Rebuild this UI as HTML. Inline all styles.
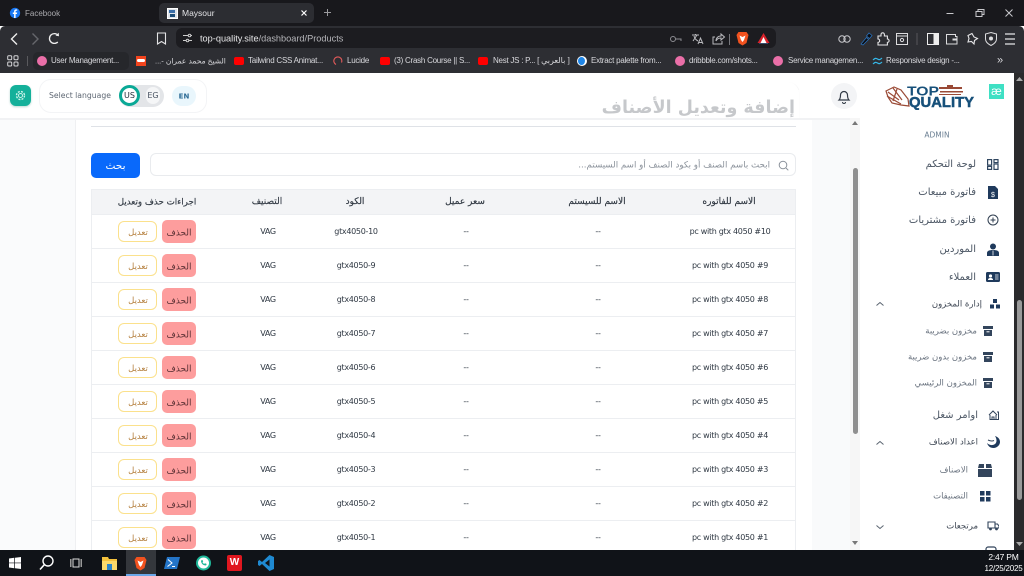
<!DOCTYPE html>
<html lang="en"><head><meta charset="utf-8"><title>Maysour</title>
<style>
html,body{margin:0;padding:0;width:1024px;height:576px;overflow:hidden;background:#fff}
body{position:relative;font-family:"Liberation Sans","DejaVu Sans",sans-serif}
div,span,svg{position:absolute;box-sizing:border-box}
.t{white-space:nowrap;line-height:1}
.c{transform:translate(-50%,-50%)}
.r{transform:translateY(-50%)}
.ar{font-family:"DejaVu Sans",sans-serif;direction:rtl}
.app{font-family:"DejaVu Sans",sans-serif}
.bm{color:#d8d8dc;font-size:8px;letter-spacing:-.25px;top:61px;transform:translateY(-50%);white-space:nowrap;line-height:1;font-family:"Liberation Sans","DejaVu Sans",sans-serif}
.row{left:91px;width:705px;height:34px;border-bottom:1px solid #eceef1;border-left:1px solid #eceef1;border-right:1px solid #eceef1;background:#fff}
.row .t{top:17px;font-size:8px;letter-spacing:-.3px;color:#2f3843;font-family:"DejaVu Sans",sans-serif;transform:translate(-50%,-50%)}
.del{left:70px;top:5px;width:34px;height:23px;background:#fd9d9d;border-radius:5px}
.edit{left:26px;top:6px;width:39px;height:21px;background:#fff;border:1px solid #fbe18c;border-radius:6px}
.row .del .t{left:17px;top:13.500px;font-size:9px;letter-spacing:0;color:#5a3034;direction:rtl}
.row .edit .t{left:19px;top:10.500px;font-size:8.500px;letter-spacing:0;color:#b5803f;direction:rtl}
.hd{top:202px;font-size:9px;color:#2e3640;transform:translate(-50%,-42%);direction:rtl;-webkit-text-stroke:.15px #2e3640}
.m{font-size:10px;color:#4a5563;transform:translateY(-42%);direction:rtl;font-family:"DejaVu Sans",sans-serif}
.s{font-size:8.500px;color:#6b7480;transform:translateY(-42%);direction:rtl;font-family:"DejaVu Sans",sans-serif}
</style></head><body>

<!-- tab strip -->
<div style="left:0;top:0;width:1024px;height:26px;background:#18181c"></div>
<svg style="left:9px;top:7px" width="12" height="12" viewBox="0 0 12 12"><circle cx="6" cy="6" r="5.200" fill="#1877f2"/><path d="M6.600 11V7h1.300l.3-1.500H6.600V4.600c0-.5.2-.8.8-.8h.8V2.500c-.3 0-.7-.1-1.100-.1-1.200 0-2 .7-2 2v1.100H3.800V7h1.300v4z" fill="#fff"/></svg>
<span class="t r" style="left:25px;top:13.500px;font-size:8px;color:#a9a9ad">Facebook</span>
<div style="left:159px;top:3px;width:155px;height:20px;background:#2c2d32;border-radius:5px"></div>
<div style="left:167px;top:8px;width:11px;height:11px;background:#dfe4ea;border:1px solid #fff"><div style="left:1px;top:1px;width:6px;height:3px;background:#3a6ea8"></div><div style="left:2px;top:5px;width:5px;height:3px;background:#1d4e79"></div></div>
<span class="t r" style="left:182px;top:13px;font-size:8.500px;color:#e3e3e6">Maysour</span>
<svg style="left:300px;top:9px" width="8" height="8" viewBox="0 0 8 8"><path d="M1.500 1.500l5 5M6.500 1.500l-5 5" stroke="#fff" stroke-width="1.200"/></svg>
<svg style="left:323px;top:8px" width="9" height="9" viewBox="0 0 9 9"><path d="M4.500 1v7M1 4.500h7" stroke="#9a9a9e" stroke-width="1"/></svg>
<svg style="left:945px;top:8px" width="72" height="10" viewBox="0 0 72 10"><path d="M1.500 5.500h7" stroke="#c8c8cc"/><path d="M31 3.500h6v5h-6zM33 3.500V1.500h6v5h-2" stroke="#c8c8cc" fill="none"/><path d="M60.500 1.500l7 7M67.500 1.500l-7 7" stroke="#c8c8cc"/></svg>

<!-- toolbar -->
<div style="left:0;top:26px;width:1024px;height:47px;background:#2d2e33;border-radius:5px 5px 0 0"></div>
<svg style="left:8px;top:31px" width="60" height="16" viewBox="0 0 60 16"><path d="M9 2.500L3.500 8 9 13.500" stroke="#eee" stroke-width="1.400" fill="none"/><path d="M24.500 2.500L30 8l-5.500 5.500" stroke="#66676c" stroke-width="1.400" fill="none"/><path d="M50 4.200A4.900 4.900 0 1 0 49.800 11" stroke="#eee" stroke-width="1.300" fill="none"/><path d="M47.500 4.600L51 5.200 50.700 1.700z" fill="#eee"/></svg>
<svg style="left:156px;top:32px" width="11" height="13" viewBox="0 0 11 13"><path d="M1.500 1h8v11L5.500 9.500 1.500 12z" stroke="#e4e4e6" stroke-width="1.100" fill="none"/></svg>
<div style="left:176px;top:28px;width:600px;height:20px;background:#1c1c20;border-radius:6px"></div>
<svg style="left:182px;top:33px" width="11" height="10" viewBox="0 0 11 10"><path d="M1 2.500h5M1 7.500h3M9 2.500h1M7 7.500h3" stroke="#ccc" fill="none"/><circle cx="7.500" cy="2.500" r="1.300" stroke="#ccc" fill="none"/><circle cx="5.500" cy="7.500" r="1.300" stroke="#ccc" fill="none"/></svg>
<span class="t r" style="left:200px;top:38.500px;font-size:9.200px;color:#e8e8ea">top-quality.site<span style="position:static;color:#b5b5b9">/dashboard/Products</span></span>
<svg style="left:669px;top:32px" width="64" height="14" viewBox="0 0 64 14"><circle cx="4" cy="7" r="2.500" stroke="#8d8d92" fill="none"/><path d="M6.500 7h5.500v2" stroke="#8d8d92" fill="none"/><path d="M23 3h7M26.500 2v1M24 9l4-6M25 4c.5 2 2 4 4 5M29 12l2.500-6 2.500 6M30 10.500h3" stroke="#b9b9bd" fill="none"/><path d="M46 5h-2v7h9V9M47 9c0-3 2-5 5-5V2l3.500 3L52 8V6c-2 0-4 1-5 3" stroke="#b9b9bd" fill="none"/><path d="M60.500 2v11" stroke="#77777c"/></svg>
<svg style="left:736px;top:31px" width="13" height="15" viewBox="0 0 13 15"><path d="M2.500 1h8L12.500 4 10.500 12 6.500 14.500 2.500 12 .5 4z" fill="#f1521f"/><path d="M3.500 4.500l3 1.500 3-1.500L8 9l-1.500 2L5 9z" fill="#fff"/></svg>
<svg style="left:757px;top:32px" width="13" height="12" viewBox="0 0 13 12"><path d="M6.500 1L12.500 11H.5z" fill="#d8222a"/><path d="M6.500 5L9.500 11h-6z" fill="#fff"/><path d="M2 11h9v1H2z" fill="#3a4a6a"/></svg>
<svg style="left:838px;top:31px" width="182" height="16" viewBox="0 0 182 16"><g transform="translate(0,1)"><circle cx="4" cy="7" r="3.200" stroke="#c9c9cd" fill="none"/><circle cx="9" cy="7" r="3.200" stroke="#c9c9cd" fill="none"/></g><path d="M23 13l5.500-6.500 2 2-5.500 5.500zM28.500 5l2.500-3 3 2.500-2.500 3z" fill="#0b0c0f" stroke="#2a6fb8" stroke-width=".8"/><path d="M40 5h3V3.500a1.700 1.700 0 0 1 3.400 0V5h3v3a1.700 1.700 0 0 1 0 3.400V14h-9.400v-2.600a1.700 1.700 0 0 0 0-3.400z" stroke="#e6e6e8" stroke-width="1.100" fill="none"/><rect x="58.500" y="2.500" width="11" height="11" stroke="#dcdcde" fill="none"/><path d="M58.500 5h11" stroke="#dcdcde"/><circle cx="64" cy="9" r="1.600" stroke="#dcdcde" fill="none"/><path d="M79 2v12" stroke="#56565b"/><rect x="89.500" y="2.500" width="11" height="11" stroke="#eee" fill="none"/><rect x="95.500" y="2.500" width="5" height="11" fill="#eee"/><path d="M108.500 3.500h9v2h1.500v7.500h-10.500z" stroke="#dcdcde" fill="none"/><path d="M114.500 7.500h4.500v2h-4.500z" fill="#dcdcde"/><path d="M134 2.500l2 3.500 3.500 1.500-3 2-.5 3.500-2.500-2.500-3.500.5 1-3.500-1-3z" stroke="#e6e6e8" stroke-width="1.100" fill="none"/><path d="M153 1.500l5.500 1.500v5c0 3-2.500 5-5.500 6.500-3-1.500-5.500-3.500-5.500-6.500V3z" stroke="#dcdcde" fill="none"/><circle cx="153" cy="7.500" r="2" fill="#dcdcde"/><path d="M167 3h10M167 8h10M167 13h10" stroke="#e6e6e8" stroke-width="1.200"/></svg>

<!-- bookmarks -->
<svg style="left:7px;top:55px" width="12" height="12" viewBox="0 0 12 12"><g stroke="#d5d5d8" fill="none"><rect x=".7" y=".7" width="4" height="4" rx="1"/><rect x="7" y=".7" width="4" height="4" rx="1"/><rect x=".7" y="7" width="4" height="4" rx="1"/><rect x="7" y="7" width="4" height="4" rx="1"/></g></svg>
<div style="left:27px;top:56px;width:1px;height:10px;background:#5a5a5e"></div>
<div style="left:33px;top:52px;width:96px;height:18px;background:#26272b;border-radius:5px"></div>
<div style="left:37px;top:56px;width:10px;height:10px;border-radius:50%;background:#ea6fa8"></div>
<span class="bm" style="left:51px">User Management...</span>
<div style="left:136px;top:56px;width:10px;height:10px;background:#f2441d"></div><div style="left:137px;top:59px;width:8px;height:3px;background:#fff;border-radius:2px"></div>
<span class="bm ar" style="left:155px;font-size:7.500px;letter-spacing:0">الشيخ محمد عمران -...</span>
<div style="left:234px;top:57px;width:10px;height:8px;background:#f00;border-radius:2px"></div>
<span class="bm" style="left:248px">Tailwind CSS Animat...</span>
<svg style="left:333px;top:55px" width="10" height="12" viewBox="0 0 10 12"><path d="M3 9.500A4 4 0 1 1 8.500 7.500" stroke="#e25a5a" stroke-width="1.100" fill="none"/></svg>
<span class="bm" style="left:347px">Lucide</span>
<div style="left:380px;top:57px;width:10px;height:8px;background:#f00;border-radius:2px"></div>
<span class="bm" style="left:394px">(3) Crash Course || S...</span>
<div style="left:478px;top:57px;width:10px;height:8px;background:#f00;border-radius:2px"></div>
<span class="bm" style="left:493px;direction:ltr">Nest JS : P... [ بالعربي ]&lrm;</span>
<div style="left:577px;top:56px;width:10px;height:10px;border-radius:50%;background:#fff"></div><div style="left:578px;top:57px;width:7px;height:8px;border-radius:50%;background:#1f86e8"></div>
<span class="bm" style="left:591px">Extract palette from...</span>
<div style="left:675px;top:56px;width:10px;height:10px;border-radius:50%;background:#ea6fa8"></div>
<span class="bm" style="left:689px">dribbble.com/shots...</span>
<div style="left:773px;top:56px;width:10px;height:10px;border-radius:50%;background:#ea6fa8"></div>
<span class="bm" style="left:788px">Service managemen...</span>
<svg style="left:872px;top:57px" width="11" height="8" viewBox="0 0 11 8"><path d="M1 3c2-2 3-2 4.500-1S8 3 10 1M1 7c2-2 3-2 4.500-1S8 7 10 5" stroke="#35b7e8" stroke-width="1.200" fill="none"/></svg>
<span class="bm" style="left:886px">Responsive design -...</span>
<span class="bm" style="left:997px;font-size:11px">»</span>

<!-- page background -->
<div style="left:0;top:73px;width:1014px;height:477px;background:#fff"></div>
<div style="left:0;top:118px;width:75px;height:432px;background:#fafbfc"></div>
<div style="left:75px;top:118px;width:1px;height:432px;background:#eff0f2"></div>
<div style="left:812px;top:118px;width:38px;height:432px;background:#f9fafb"></div>
<div style="left:0;top:118px;width:850px;height:2px;background:#f1f2f4"></div>

<!-- header left -->
<div style="left:10px;top:85px;width:21px;height:21px;background:#14b09a;border-radius:6px;box-shadow:0 1px 2px #b8d8d2"></div>
<svg style="left:15px;top:90px" width="11" height="11" viewBox="0 0 11 11"><circle cx="5.500" cy="5.500" r="2" stroke="#cdf3ea" fill="none"/><circle cx="5.500" cy="5.500" r="4" stroke="#cdf3ea" stroke-dasharray="2 1.200" stroke-width="1.400" fill="none"/></svg>
<div style="left:39px;top:79px;width:168px;height:34px;border:1px solid #f3f4f6;border-radius:12px;background:#fff"></div>
<span class="t r app" style="left:49px;top:96px;font-size:7.700px;color:#5e6773">Select language</span>
<div style="left:119px;top:85px;width:45px;height:22px;background:#e3e5e8;border-radius:11px"></div>
<div style="left:146px;top:87px;width:14px;height:17px;background:#f5f6f7;border-radius:7px"></div>
<span class="t c app" style="left:153px;top:96px;font-size:8px;color:#4b5563">EG</span>
<div style="left:119px;top:85px;width:21px;height:21px;background:#fff;border:3px solid #0aa996;border-radius:50%"></div>
<span class="t c app" style="left:129.500px;top:96px;font-size:8px;color:#1f2a37">US</span>
<div style="left:172px;top:86px;width:24px;height:20px;background:#e9f6fc;border-radius:10px"></div>
<span class="t c app" style="left:184px;top:96.500px;font-size:7px;font-weight:bold;color:#2d6c96">EN</span>

<!-- panel top -->
<div style="left:76px;top:82px;width:724px;height:36px;border-right:1px solid #f6f6f7;border-radius:0 12px 0 0"></div>
<svg style="left:831px;top:83px" width="26" height="26" viewBox="0 0 26 26"><circle cx="13" cy="13" r="13" fill="#f3f4f6"/><path d="M8 17c1.500-1.500 1.500-3 1.500-5a3.500 3.500 0 0 1 7 0c0 2 0 3.500 1.500 5z" stroke="#333b46" stroke-width="1.200" fill="none"/><path d="M11.500 19a1.500 1.500 0 0 0 3 0" stroke="#333b46" fill="none"/></svg>

<!-- logo -->
<svg style="left:885px;top:84px" width="92" height="26" viewBox="0 0 92 26"><g stroke="#9a4a36" stroke-width="1.200" fill="none"><path d="M1 7l8-4 7 3 7 9 1 7-8-1-9-2-4-6z"/><path d="M3 8l11 8M8 4l9 12M2 12l14 8M12 5l-4 12"/></g><path d="M54 3h8V1h6v2h9v2H54zM55 7h23v1.500H55zM54 10h22v1H54z" fill="#9a4a36"/><text x="22" y="11.500" font-family="Liberation Sans" font-weight="bold" font-size="13" textLength="32" lengthAdjust="spacingAndGlyphs" fill="#17507a">TOP</text><text x="24" y="23" font-family="Liberation Sans" font-weight="bold" font-size="15" textLength="65" lengthAdjust="spacingAndGlyphs" fill="#17507a" stroke="#17507a" stroke-width=".5">QUALITY</text></svg>
<div style="left:989px;top:84px;width:15px;height:15px;background:#3fe0c4"></div>
<span class="t c" style="left:996.500px;top:90.500px;font-size:12px;color:#fff">æ</span>

<!-- title -->
<span class="t ar" style="right:229px;top:100px;font-size:17.500px;color:#343c46;font-weight:bold">إضافة وتعديل الأصناف</span>
<div style="left:590px;top:90px;width:215px;height:28px;background:rgba(255,255,255,.72)"></div>
<div style="left:91px;top:126px;width:705px;height:1px;background:#dfe2e7"></div>

<!-- search -->
<div style="left:150px;top:153px;width:646px;height:23px;border:1px solid #e9ebee;border-radius:6px;background:#fff"></div>
<span class="t r ar" style="right:254px;top:165.500px;font-size:8.700px;color:#8b929b">ابحث باسم الصنف أو بكود الصنف أو اسم السيستم...</span>
<svg style="left:778px;top:160px" width="11" height="11" viewBox="0 0 11 11"><circle cx="5" cy="5" r="3.800" stroke="#8b929b" fill="none"/><path d="M8 8l2.300 2.300" stroke="#8b929b"/></svg>
<div style="left:91px;top:153px;width:49px;height:25px;background:#0969fb;border-radius:5px"></div>
<span class="t c ar" style="left:115.500px;top:166px;font-size:10.500px;color:#fff">بحث</span>

<!-- table head -->
<div style="left:91px;top:189px;width:705px;height:26px;background:#f3f4f6;border:1px solid #eceef1"></div>
<span class="t hd ar" style="left:729px">الاسم للفاتوره</span>
<span class="t hd ar" style="left:597px">الاسم للسيستم</span>
<span class="t hd ar" style="left:465px">سعر عميل</span>
<span class="t hd ar" style="left:355px">الكود</span>
<span class="t hd ar" style="left:267px">التصنيف</span>
<span class="t hd ar" style="left:157px;font-size:8.700px">اجراءات حذف وتعديل</span>

<!-- rows -->
<div class="row" style="top:215px"><span class="t" style="left:638px">pc with gtx 4050 #10</span><span class="t" style="left:506px">--</span><span class="t" style="left:374px">--</span><span class="t" style="left:264px">gtx4050-10</span><span class="t" style="left:176px">VAG</span><div class="del"><span class="t c ar">الحذف</span></div><div class="edit"><span class="t c ar">تعديل</span></div></div>
<div class="row" style="top:249px"><span class="t" style="left:638px">pc with gtx 4050 #9</span><span class="t" style="left:506px">--</span><span class="t" style="left:374px">--</span><span class="t" style="left:264px">gtx4050-9</span><span class="t" style="left:176px">VAG</span><div class="del"><span class="t c ar">الحذف</span></div><div class="edit"><span class="t c ar">تعديل</span></div></div>
<div class="row" style="top:283px"><span class="t" style="left:638px">pc with gtx 4050 #8</span><span class="t" style="left:506px">--</span><span class="t" style="left:374px">--</span><span class="t" style="left:264px">gtx4050-8</span><span class="t" style="left:176px">VAG</span><div class="del"><span class="t c ar">الحذف</span></div><div class="edit"><span class="t c ar">تعديل</span></div></div>
<div class="row" style="top:317px"><span class="t" style="left:638px">pc with gtx 4050 #7</span><span class="t" style="left:506px">--</span><span class="t" style="left:374px">--</span><span class="t" style="left:264px">gtx4050-7</span><span class="t" style="left:176px">VAG</span><div class="del"><span class="t c ar">الحذف</span></div><div class="edit"><span class="t c ar">تعديل</span></div></div>
<div class="row" style="top:351px"><span class="t" style="left:638px">pc with gtx 4050 #6</span><span class="t" style="left:506px">--</span><span class="t" style="left:374px">--</span><span class="t" style="left:264px">gtx4050-6</span><span class="t" style="left:176px">VAG</span><div class="del"><span class="t c ar">الحذف</span></div><div class="edit"><span class="t c ar">تعديل</span></div></div>
<div class="row" style="top:385px"><span class="t" style="left:638px">pc with gtx 4050 #5</span><span class="t" style="left:506px">--</span><span class="t" style="left:374px">--</span><span class="t" style="left:264px">gtx4050-5</span><span class="t" style="left:176px">VAG</span><div class="del"><span class="t c ar">الحذف</span></div><div class="edit"><span class="t c ar">تعديل</span></div></div>
<div class="row" style="top:419px"><span class="t" style="left:638px">pc with gtx 4050 #4</span><span class="t" style="left:506px">--</span><span class="t" style="left:374px">--</span><span class="t" style="left:264px">gtx4050-4</span><span class="t" style="left:176px">VAG</span><div class="del"><span class="t c ar">الحذف</span></div><div class="edit"><span class="t c ar">تعديل</span></div></div>
<div class="row" style="top:453px"><span class="t" style="left:638px">pc with gtx 4050 #3</span><span class="t" style="left:506px">--</span><span class="t" style="left:374px">--</span><span class="t" style="left:264px">gtx4050-3</span><span class="t" style="left:176px">VAG</span><div class="del"><span class="t c ar">الحذف</span></div><div class="edit"><span class="t c ar">تعديل</span></div></div>
<div class="row" style="top:487px"><span class="t" style="left:638px">pc with gtx 4050 #2</span><span class="t" style="left:506px">--</span><span class="t" style="left:374px">--</span><span class="t" style="left:264px">gtx4050-2</span><span class="t" style="left:176px">VAG</span><div class="del"><span class="t c ar">الحذف</span></div><div class="edit"><span class="t c ar">تعديل</span></div></div>
<div class="row" style="top:521px"><span class="t" style="left:638px">pc with gtx 4050 #1</span><span class="t" style="left:506px">--</span><span class="t" style="left:374px">--</span><span class="t" style="left:264px">gtx4050-1</span><span class="t" style="left:176px">VAG</span><div class="del"><span class="t c ar">الحذف</span></div><div class="edit"><span class="t c ar">تعديل</span></div></div>

<!-- inner scrollbar -->
<div style="left:850px;top:118px;width:10px;height:432px;background:#f6f6f6"></div>
<div style="left:853px;top:168px;width:5px;height:266px;background:#8f8f8f;border-radius:3px"></div>
<svg style="left:852px;top:121px" width="6" height="4" viewBox="0 0 6 4"><path d="M3 0l3 4H0z" fill="#777"/></svg>
<svg style="left:852px;top:541px" width="6" height="4" viewBox="0 0 6 4"><path d="M3 4l3-4H0z" fill="#777"/></svg>

<!-- sidebar -->
<div style="left:860px;top:118px;width:154px;height:432px;background:#fff"></div>
<span class="t c app" style="left:937px;top:135px;font-size:7.500px;color:#6d8194">ADMIN</span>
<span class="t m" style="right:48px;top:164px">لوحة التحكم</span>
<span class="t m" style="right:48px;top:192px">فاتورة مبيعات</span>
<span class="t m" style="right:48px;top:220px">فاتورة مشتريات</span>
<span class="t m" style="right:48px;top:249px">الموردين</span>
<span class="t m" style="right:48px;top:277px">العملاء</span>
<span class="t s" style="right:42px;top:304px;color:#3d4653">إدارة المخزون</span>
<span class="t s" style="right:47px;top:331px">مخزون بضريبة</span>
<span class="t s" style="right:47px;top:357px">مخزون بدون ضريبة</span>
<span class="t s" style="right:47px;top:383px">المخزون الرئيسي</span>
<span class="t m" style="right:46px;top:415px">اوامر شغل</span>
<span class="t s" style="right:46px;top:442px;color:#3d4653">اعداد الاصناف</span>
<span class="t s" style="right:56px;top:470px">الاصناف</span>
<span class="t s" style="right:56px;top:496px">التصنيفات</span>
<span class="t s" style="right:46px;top:526px;color:#3d4653">مرتجعات</span>
<svg style="left:875px;top:300px" width="10" height="8" viewBox="0 0 10 8"><path d="M1.500 5.500L5 2.500l3.500 3" stroke="#5a6470" fill="none"/></svg>
<svg style="left:875px;top:439px" width="10" height="8" viewBox="0 0 10 8"><path d="M1.500 5.500L5 2.500l3.500 3" stroke="#5a6470" fill="none"/></svg>
<svg style="left:875px;top:523px" width="10" height="8" viewBox="0 0 10 8"><path d="M1.500 2.500L5 5.500l3.500-3" stroke="#5a6470" fill="none"/></svg>
<svg style="left:987px;top:159px" width="12" height="11" viewBox="0 0 12 11"><g stroke="#2f4660" stroke-width="1.200" fill="none"><rect x=".6" y=".6" width="4" height="5.500"/><rect x="7" y=".6" width="4" height="3"/><rect x=".6" y="7.400" width="4" height="3"/><rect x="7" y="5" width="4" height="5.400"/></g></svg>
<svg style="left:988px;top:186px" width="10" height="13" viewBox="0 0 10 13"><path d="M0 0h7l3 3v10H0z" fill="#1f3a5c"/><text x="5" y="11" text-anchor="middle" font-family="Liberation Sans" font-size="7" fill="#fff">$</text></svg>
<svg style="left:987px;top:214px" width="12" height="12" viewBox="0 0 12 12"><circle cx="6" cy="6" r="5" stroke="#2f3e50" fill="none"/><path d="M6 3.500v5M3.500 6h5" stroke="#2f3e50"/></svg>
<svg style="left:987px;top:243px" width="12" height="13" viewBox="0 0 12 13"><circle cx="6" cy="3.500" r="3" fill="#1f3a5c"/><path d="M0 13V10c0-2 2-3 6-3s6 1 6 3v3z" fill="#1f3a5c"/><path d="M6 7.500v5" stroke="#fff" stroke-width=".8"/></svg>
<svg style="left:986px;top:272px" width="14" height="10" viewBox="0 0 14 10"><rect width="14" height="10" rx="1.500" fill="#1f3a5c"/><circle cx="4.500" cy="4" r="1.600" fill="#fff"/><path d="M2 8c0-1.500 1-2 2.500-2S7 6.500 7 8z" fill="#fff"/><path d="M9 3h3.500M9 5h3.500M9 7h3.500" stroke="#fff" stroke-width=".8"/></svg>
<svg style="left:990px;top:299px" width="10" height="10" viewBox="0 0 10 10"><g fill="#1f3a5c"><rect x="3" y="0" width="4" height="4"/><rect x="0" y="5.500" width="4" height="4"/><rect x="6" y="5.500" width="4" height="4"/></g></svg>
<svg style="left:983px;top:326px" width="10" height="10" viewBox="0 0 10 10"><path d="M0 0h10v3H0zM1 4h8v6H1z" fill="#33455c"/><path d="M3.500 5.800h3" stroke="#fff"/></svg>
<svg style="left:983px;top:352px" width="10" height="10" viewBox="0 0 10 10"><path d="M0 0h10v3H0zM1 4h8v6H1z" fill="#33455c"/><path d="M3.500 5.800h3" stroke="#fff"/></svg>
<svg style="left:983px;top:378px" width="10" height="10" viewBox="0 0 10 10"><path d="M0 0h10v3H0zM1 4h8v6H1z" fill="#33455c"/><path d="M3.500 5.800h3" stroke="#fff"/></svg>
<svg style="left:988px;top:410px" width="11" height="10" viewBox="0 0 11 10"><path d="M1 5l4-4 4 4M2 5v4.500h6V5M4 9.500V7h2v2.500M9 2h1.500v7.500H8" stroke="#33455c" fill="none"/></svg>
<svg style="left:987px;top:436px" width="13" height="12" viewBox="0 0 13 12"><path d="M8 0c3 1 5 3 5 6 0 3-3 6-6.500 6S1 10 0 7c2 2 5 3 8 1 2-1.500 2-5 0-8z" fill="#1f3a5c"/><path d="M1 4c2 1 4 1.500 6 .5" stroke="#33455c" fill="none"/></svg>
<svg style="left:978px;top:464px" width="14" height="13" viewBox="0 0 14 13"><path d="M1 0h5v4H0zM8 0h5l1 4H8zM0 5h14v8H0z" fill="#33455c"/></svg>
<svg style="left:980px;top:491px" width="11" height="11" viewBox="0 0 11 11"><g fill="#1f3a5c"><rect width="4.500" height="4.500"/><rect x="6" width="4.500" height="4.500"/><rect y="6" width="4.500" height="4.500"/><rect x="6" y="6" width="4.500" height="4.500"/></g></svg>
<svg style="left:987px;top:521px" width="12" height="10" viewBox="0 0 12 10"><path d="M1 1h7v6H1zM8 3h2.500L12 5v2H8z" stroke="#33455c" fill="none" stroke-width="1.100"/><circle cx="3.500" cy="8" r="1.400" fill="#33455c"/><circle cx="9.500" cy="8" r="1.400" fill="#33455c"/></svg>
<svg style="left:985px;top:546px" width="12" height="6" viewBox="0 0 12 6"><path d="M1 6V3c0-1 1-2 2-2h6c1 0 2 1 2 2v3" stroke="#33455c" fill="none" stroke-width="1.200"/></svg>

<!-- page scrollbar -->
<div style="left:1014px;top:73px;width:10px;height:477px;background:#2a2a2c"></div>
<div style="left:1017px;top:300px;width:5px;height:200px;background:#9a9a9a;border-radius:3px"></div>
<svg style="left:1016px;top:77px" width="7" height="4" viewBox="0 0 7 4"><path d="M3.500 0l3.500 4H0z" fill="#aaa"/></svg>
<svg style="left:1016px;top:542px" width="7" height="4" viewBox="0 0 7 4"><path d="M3.500 4L7 0H0z" fill="#aaa"/></svg>

<!-- taskbar -->
<div style="left:0;top:550px;width:1024px;height:26px;background:#101318"></div>
<div style="left:126px;top:550px;width:30px;height:26px;background:#34373c"></div>
<div style="left:126px;top:574px;width:30px;height:2px;background:#6aa7e8"></div>
<svg style="left:9px;top:557px" width="12" height="12" viewBox="0 0 12 12"><path d="M0 1.500L5.300 .8v4.800H0zM6 .7L12 0v5.600H6zM0 6.300h5.300v4.900L0 10.500zM6 6.300h6V12l-6-.8z" fill="#fff"/></svg>
<svg style="left:39px;top:555px" width="15" height="16" viewBox="0 0 15 16"><circle cx="9" cy="6" r="5" stroke="#fff" stroke-width="1.400" fill="none"/><path d="M5.500 9.500L1 14.500" stroke="#fff" stroke-width="1.600"/></svg>
<svg style="left:70px;top:557px" width="12" height="12" viewBox="0 0 12 12"><path d="M3 2h6v8H3z" stroke="#ddd" fill="none"/><path d="M0 2h1.500v8H0zM10.500 2H12v8h-1.500z" fill="#999"/></svg>
<svg style="left:102px;top:556px" width="15" height="14" viewBox="0 0 15 14"><path d="M0 1h6l1 2h8v11H0z" fill="#f4c23d"/><path d="M0 5h15v9H0z" fill="#fbd96a"/><path d="M5 8h5v6H5z" fill="#2a83c9"/></svg>
<svg style="left:134px;top:556px" width="13" height="15" viewBox="0 0 13 15"><path d="M2.500 1h8L12.500 4 10.500 12 6.500 14.500 2.500 12 .5 4z" fill="#f1521f"/><path d="M3.500 4.500l3 1.500 3-1.500L8 9l-1.500 2L5 9z" fill="#fff"/></svg>
<svg style="left:164px;top:557px" width="16" height="12" viewBox="0 0 16 12"><path d="M3 0h13l-3 12H0z" fill="#2475c8"/><path d="M4 2.500L8 6 3.500 9.500M8 9.500h3" stroke="#fff" fill="none"/></svg>
<svg style="left:196px;top:555px" width="15" height="16" viewBox="0 0 15 16"><circle cx="7.500" cy="8" r="7.500" fill="#1fb89a"/><circle cx="7.500" cy="8" r="5.500" fill="#fff"/><path d="M5 5.500c0 3 2 5 5 5l.7-1.500-1.700-.8-.8.7c-.8-.4-1.300-1-1.700-1.700l.7-.8L6.500 5z" fill="#1fb89a"/></svg>
<div style="left:227px;top:555px;width:15px;height:16px;background:#e0171f;border-radius:2px"></div>
<span class="t c" style="left:234.500px;top:563px;font-size:10px;font-weight:bold;color:#fff">W</span>
<svg style="left:258px;top:555px" width="16" height="16" viewBox="0 0 16 16"><path d="M11.500 0L16 2v12l-4.500 2L4 9l-2.500 2L0 10V6l1.500-1L4 7z" fill="#1f8ad2"/><path d="M11.500 4.500L7 8l4.500 3.500z" fill="#101318"/></svg>
<span class="t c" style="left:1003.500px;top:557px;font-size:8.500px;letter-spacing:-.2px;color:#fff">2:47 PM</span>
<span class="t c" style="left:1003.500px;top:569px;font-size:8px;letter-spacing:-.2px;color:#fff">12/25/2025</span>

</body></html>
